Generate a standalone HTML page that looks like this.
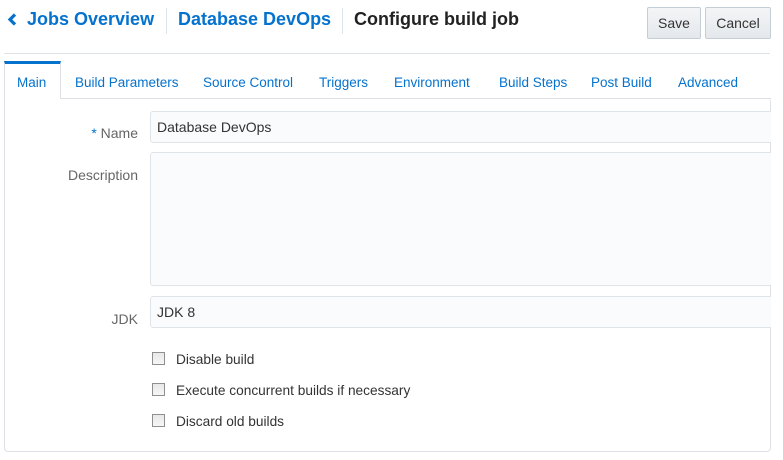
<!DOCTYPE html>
<html><head><meta charset="utf-8"><style>
*{box-sizing:border-box;margin:0;padding:0}
body{width:783px;height:460px;background:#fff;font-family:"Liberation Sans",sans-serif;position:relative;overflow:hidden;color:#333}
.a{position:absolute}
.hd{top:9px;font-size:18px;font-weight:bold;color:#0572ce;white-space:nowrap}
.sep{top:8px;width:1px;height:26px;background:#dfe4e9}
.btn{top:7px;height:32px;border:1px solid #c4ced7;border-radius:2px;background:linear-gradient(#f4f5f7,#e4e8ec);font-size:14px;text-align:center;line-height:30px;color:#333}
.tab{top:75px;font-size:13.5px;color:#0572ce;white-space:nowrap}
.lbl{font-size:14px;color:#666;text-align:right;width:120px;left:18px}
.inp{left:150px;width:640px;border:1px solid #dfe4e9;border-radius:3px;background:#fafbfd;font-size:14px;padding:7px 6px;color:#333}
.cb{left:152px;width:13px;height:13px;border:1px solid #8f8f8f;background:linear-gradient(#e8e8e8,#f6f6f6)}
.cl{left:176px;font-size:13.7px;color:#333;white-space:nowrap}
</style></head><body>
<svg class="a" style="left:7px;top:12px" width="12" height="16"><path d="M8 2.5 L3 7.5 L8 12.5" stroke="#0572ce" stroke-width="3.2" fill="none"/></svg>
<div class="a hd" style="left:27px">Jobs Overview</div>
<div class="a sep" style="left:166px"></div>
<div class="a hd" style="left:178px">Database DevOps</div>
<div class="a sep" style="left:342px"></div>
<div class="a hd" style="left:354px;color:#222">Configure build job</div>
<div class="a btn" style="left:647px;width:54px">Save</div>
<div class="a btn" style="left:705px;width:66px">Cancel</div>
<div class="a" style="left:4px;top:53px;width:766px;height:1px;background:#dfe4e9"></div>
<div class="a" style="left:4px;top:98px;width:767px;height:354px;border:1px solid #dde1e6;border-top:none;border-radius:0 4px 4px 4px;background:#fff"></div>
<div class="a" style="left:60px;top:98px;width:711px;height:1px;background:#dde1e6"></div>
<div class="a" style="left:4px;top:61px;width:57px;height:38px;border:1px solid #dde1e6;border-bottom:none;border-top:3px solid #0572ce;background:#fff"></div>
<div class="a tab" style="left:17px">Main</div>
<div class="a tab" style="left:75px">Build Parameters</div>
<div class="a tab" style="left:203px">Source Control</div>
<div class="a tab" style="left:319px">Triggers</div>
<div class="a tab" style="left:394px">Environment</div>
<div class="a tab" style="left:499px">Build Steps</div>
<div class="a tab" style="left:591px">Post Build</div>
<div class="a tab" style="left:678px">Advanced</div>
<div class="a lbl" style="top:125px"><span style="color:#0572ce">*</span> Name</div>
<div class="a inp" style="top:111px;height:32px">Database DevOps</div>
<div class="a lbl" style="top:167px">Description</div>
<div class="a inp" style="top:152px;height:134px"></div>
<div class="a lbl" style="top:311px">JDK</div>
<div class="a inp" style="top:296px;height:32px">JDK 8</div>
<div class="a" style="left:771px;top:99px;width:12px;height:361px;background:#fff"></div>
<div class="a cb" style="top:352px"></div><div class="a cl" style="top:352px">Disable build</div>
<div class="a cb" style="top:383px"></div><div class="a cl" style="top:383px">Execute concurrent builds if necessary</div>
<div class="a cb" style="top:414px"></div><div class="a cl" style="top:414px">Discard old builds</div>
</body></html>
